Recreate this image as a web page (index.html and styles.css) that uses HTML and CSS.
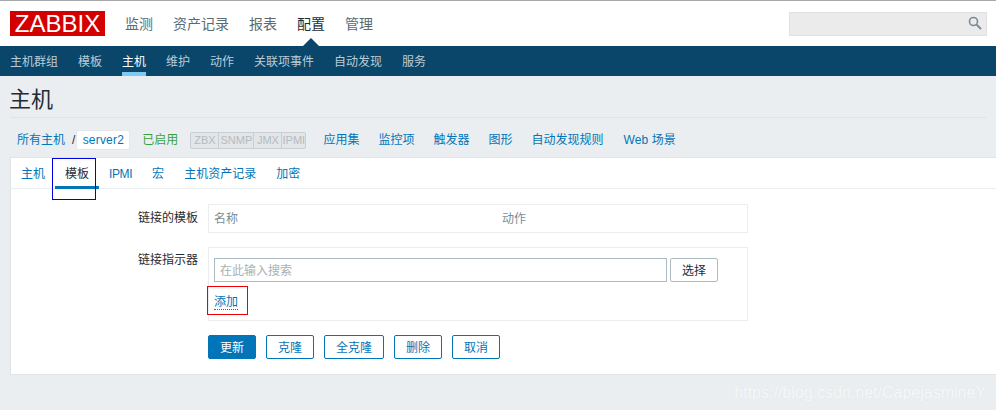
FILE: index.html
```html
<!DOCTYPE html>
<html lang="zh-CN">
<head>
<meta charset="utf-8">
<title>主机</title>
<link rel="stylesheet" href="styles.css">
</head>
<body>
<header class="top">
  <div class="logo">ZABBIX</div>
  <nav class="main-nav">
    <a>监测</a><a>资产记录</a><a>报表</a><a class="on">配置</a><a>管理</a>
  </nav>
  <div class="search">
    <svg width="14" height="14" viewBox="0 0 14 14" class="search-icon"><circle cx="5.5" cy="5.5" r="4" fill="none" stroke="#768d99" stroke-width="1.6"/><path d="M8.6 8.6L13 13" stroke="#768d99" stroke-width="2"/></svg>
  </div>
</header>
<nav class="sub-nav">
  <a>主机群组</a><a>模板</a><a class="on">主机</a><a>维护</a><a>动作</a><a>关联项事件</a><a>自动发现</a><a>服务</a>
</nav>
<main class="page">
  <h1 class="title">主机</h1>
  <div class="crumbs">
    <a class="crumb-root">所有主机</a><span class="slash">/</span><a class="crumb-cur">server2</a>
    <span class="enabled">已启用</span>
    <div class="status"><span>ZBX</span><span>SNMP</span><span>JMX</span><span>IPMI</span></div>
    <div class="links"><a>应用集</a><a>监控项</a><a>触发器</a><a>图形</a><a>自动发现规则</a><a class="spaced">Web 场景</a></div>
  </div>
  <section class="panel">
    <div class="tabs">
      <a>主机</a><a class="on">模板</a><a class="narrow">IPMI</a><a>宏</a><a>主机资产记录</a><a>加密</a>
      <div class="blue-box"></div>
    </div>
    <form class="form">
      <div class="row row-first">
        <label class="lbl">链接的模板</label>
        <div class="box box-table"><span class="col-name">名称</span><span>动作</span></div>
      </div>
      <div class="row row-second">
        <label class="lbl">链接指示器</label>
        <div class="box box-link">
          <div class="input-line">
            <div class="fake-input">在此输入搜索</div>
            <button type="button" class="btn-select">选择</button>
          </div>
          <a class="add">添加</a>
          <div class="red-box"></div>
        </div>
      </div>
      <div class="actions">
        <button type="button" class="btn primary">更新</button>
        <button type="button" class="btn">克隆</button>
        <button type="button" class="btn w60">全克隆</button>
        <button type="button" class="btn">删除</button>
        <button type="button" class="btn">取消</button>
      </div>
    </form>
  </section>
</main>
<div class="watermark">https://blog.csdn.net/CapejasmineY</div>
</body>
</html>
```

FILE: styles.css
```css
* { box-sizing: border-box; }
html, body { margin: 0; padding: 0; }
body {
  width: 996px;
  height: 410px;
  overflow: hidden;
  position: relative;
  background: #ebeef0;
  font-family: "Liberation Sans", "Noto Sans CJK SC", sans-serif;
  font-size: 12px;
  color: #1f2c33;
}
.top {
  height: 46px;
  background: #fff;
  border-top: 1px solid #a8a8a8;
  display: flex;
  align-items: flex-start;
  padding: 0 10px;
  position: relative;
}
.logo {
  margin-top: 10px;
  width: 95px;
  height: 25px;
  background: #d40000;
  color: #fff;
  font-size: 24px;
  line-height: 26px;
  text-align: center;
  white-space: nowrap;
}
.main-nav {
  display: flex;
  gap: 20px;
  margin-left: 20px;
  margin-top: 13px;
  font-size: 14px;
  line-height: 20px;
  color: #5b6a72;
}
.main-nav .on { color: #1f2c33; position: relative; }
.main-nav .on::after {
  content: "";
  position: absolute;
  left: 6px;
  top: 24px;
  border-left: 8px solid transparent;
  border-right: 8px solid transparent;
  border-bottom: 8px solid #0a466a;
}
.search {
  margin-left: auto;
  margin-top: 11px;
  width: 198px;
  height: 24px;
  background: #ebebeb;
  border: 1px solid #e0e0e0;
  position: relative;
  margin-right: -1px;
}
.search-icon { position: absolute; right: 4px; top: 3px; }
.sub-nav {
  height: 30px;
  background: #0a466a;
  display: flex;
  gap: 20px;
  padding: 0 10px;
  color: #b9cdd9;
  line-height: 32px;
}
.sub-nav a { display: block; height: 30px; }
.sub-nav .on { color: #fff; border-bottom: 4px solid #7ec8f4; }
.title {
  margin: 0 10px;
  height: 42px;
  padding-top: 10px;
  font-size: 22px;
  line-height: 28px;
  font-weight: 400;
  text-indent: -1px;
  color: #1f2c33;
  border-bottom: 1px solid #dfe4e7;
}
.crumbs {
  height: 39px;
  display: flex;
  align-items: center;
  padding-left: 17px;
  padding-bottom: 7px;
  padding-top: 12px;
  color: #0275b8;
  line-height: 20px;
}
.slash { margin: 0 1px 0 7px; color: #1f2c33; }
.crumb-cur {
  background: #fff;
  width: 54px;
  height: 20px;
  text-align: center;
  border: 1px solid #e6e9eb;
  border-radius: 2px;
  line-height: 19px;
  letter-spacing: 0.2px;
}
.enabled { color: #3a9f3f; margin-left: 12px; }
.status {
  display: flex;
  margin-left: 12px;
  width: 116px;
  height: 17px;
  border: 1px solid #c9cfd2;
  border-radius: 2px;
  color: #b4bbbf;
  font-size: 11px;
  line-height: 15px;
  background: #e3e6e8;
}
.status span { text-align: center; border-left: 1px solid #c9cfd2; }
.status span:nth-child(1) { width: 27px; border-left: 0; }
.status span:nth-child(2) { width: 35px; }
.status span:nth-child(3) { width: 28px; }
.status span:nth-child(4) { width: 24px; }
.links { display: flex; gap: 19px; margin-left: 17px; }
.spaced { letter-spacing: 0.1px; margin-left: 1px; }
.panel {
  margin-left: 10px;
  height: 218px;
  background: #fff;
  border: 1px solid #dfe4e7;
  border-right: 0;
}
.tabs {
  height: 31px;
  display: flex;
  gap: 20px;
  padding-left: 10px;
  border-bottom: 1px solid #ebeef0;
  color: #0275b8;
  line-height: 32px;
  position: relative;
}
.tabs a { display: block; height: 31px; }
.tabs .narrow { letter-spacing: -0.4px; }
.tabs .on {
  color: #1f2c33;
  position: relative;
}
.tabs .on::after {
  content: "";
  position: absolute;
  left: -10px;
  right: -10px;
  bottom: 0;
  height: 3px;
  background: #0275b8;
}
.blue-box {
  position: absolute;
  left: 41px;
  top: 0;
  width: 44px;
  height: 42px;
  border: 1px solid #0000e0;
}
.form { padding-top: 15px; }
.row { display: flex; }
.lbl {
  width: 187px;
  text-align: right;
  color: #1f2c33;
  padding-top: 6px;
  line-height: 16px;
}
.row-second .lbl { padding-top: 5px; }
.box {
  width: 540px;
  margin-left: 10px;
  border: 1px solid #ebeef0;
}
.box-table {
  height: 29px;
  display: flex;
  padding-left: 5px;
  color: #768d99;
  line-height: 29px;
}
.col-name { width: 288px; }
.row-second { margin-top: 14px; }
.box-link { height: 74px; padding: 10px 5px 0; position: relative; }
.input-line { display: flex; gap: 3px; }
.fake-input {
  width: 453px;
  height: 24px;
  border: 1px solid #acbbc2;
  padding-left: 5px;
  line-height: 24px;
  color: #a8b0b5;
}
.btn-select {
  width: 48px;
  height: 24px;
  padding: 0 0 2px;
  border: 1px solid #acbbc2;
  border-radius: 2px;
  background: #fff;
  color: #1f2c33;
  font: inherit;
}
.add {
  display: block;
  width: 24px;
  margin-top: 12px;
  color: #0275b8;
  line-height: 16px;
  height: 16px;
  border-bottom: 1px dotted #0275b8;
}
.red-box {
  position: absolute;
  left: -2px;
  top: 38px;
  width: 41px;
  height: 29px;
  border: 1px solid #f00000;
}
.actions {
  display: flex;
  gap: 10px;
  margin-top: 14px;
  padding-left: 197px;
}
.btn {
  height: 24px;
  width: 48px;
  padding: 0 0 2px;
  border: 1px solid #0275b8;
  border-radius: 2px;
  background: #fff;
  color: #0275b8;
  font: inherit;
}
.btn.primary { background: #0275b8; color: #fff; }
.btn.w60 { width: 60px; }
.watermark {
  position: absolute;
  right: 10px;
  top: 383px;
  font-size: 16px;
  line-height: 20px;
  color: #fff;
  opacity: 0.55;
  text-shadow: 0 0 1px #d5d9dc;
  white-space: nowrap;
}
```
